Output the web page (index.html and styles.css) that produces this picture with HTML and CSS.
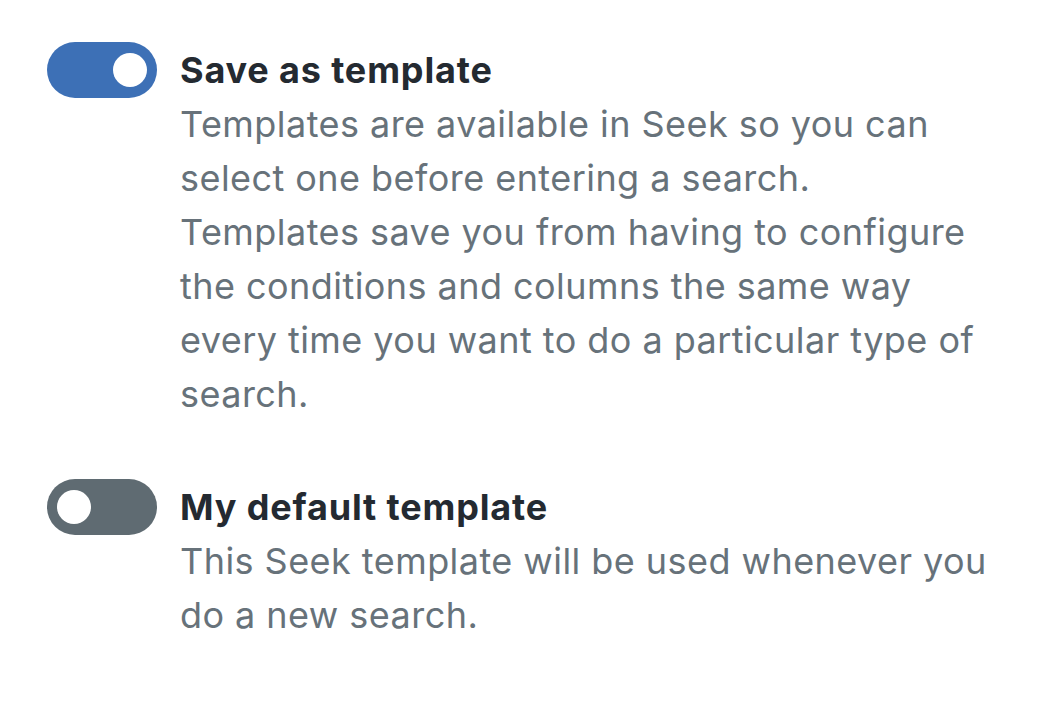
FILE: index.html
```html
<!DOCTYPE html>
<html>
<head>
<meta charset="utf-8">
<link rel="stylesheet" href="styles.css">
</head>
<body>
<div class="settings">
  <div class="option">
    <div class="switch on"><span class="knob"></span></div>
    <div class="text">
      <div class="title">Save as template</div>
      <div class="desc">Templates are available in Seek so you can<br>select one before entering a search.<br>Templates save you from having to configure<br>the conditions and columns the same way<br>every time you want to do a particular type of<br>search.</div>
    </div>
  </div>
  <div class="option">
    <div class="switch off"><span class="knob"></span></div>
    <div class="text">
      <div class="title">My default template</div>
      <div class="desc">This Seek template will be used whenever you<br>do a new search.</div>
    </div>
  </div>
</div>
</body>
</html>
```
FILE: styles.css
```css
html, body {
  margin: 0;
  padding: 0;
  background: #ffffff;
}
body {
  font-family: "Inter", "Liberation Sans", sans-serif;
  font-size: 36px;
  line-height: 54px;
}
.settings {
  display: flex;
  flex-direction: column;
  gap: 59px;
  padding: 43px 0 0 47px;
}
.option {
  display: flex;
  align-items: flex-start;
  gap: 23px;
}
.switch {
  flex: none;
  width: 110px;
  height: 56px;
  margin-top: -1px;
  border-radius: 28px;
  display: flex;
  align-items: center;
  padding: 0 10px;
  box-sizing: border-box;
}
.switch.on {
  background: #3d70b6;
  justify-content: flex-end;
}
.switch.off {
  background: #5f6b72;
  justify-content: flex-start;
}
.knob {
  width: 34px;
  height: 34px;
  border-radius: 50%;
  background: #ffffff;
}
.text {
  white-space: nowrap;
}
.title {
  font-weight: 700;
  color: #242a31;
  letter-spacing: 0.85px;
}
.desc {
  color: #67727a;
  letter-spacing: 0.45px;
}
```
